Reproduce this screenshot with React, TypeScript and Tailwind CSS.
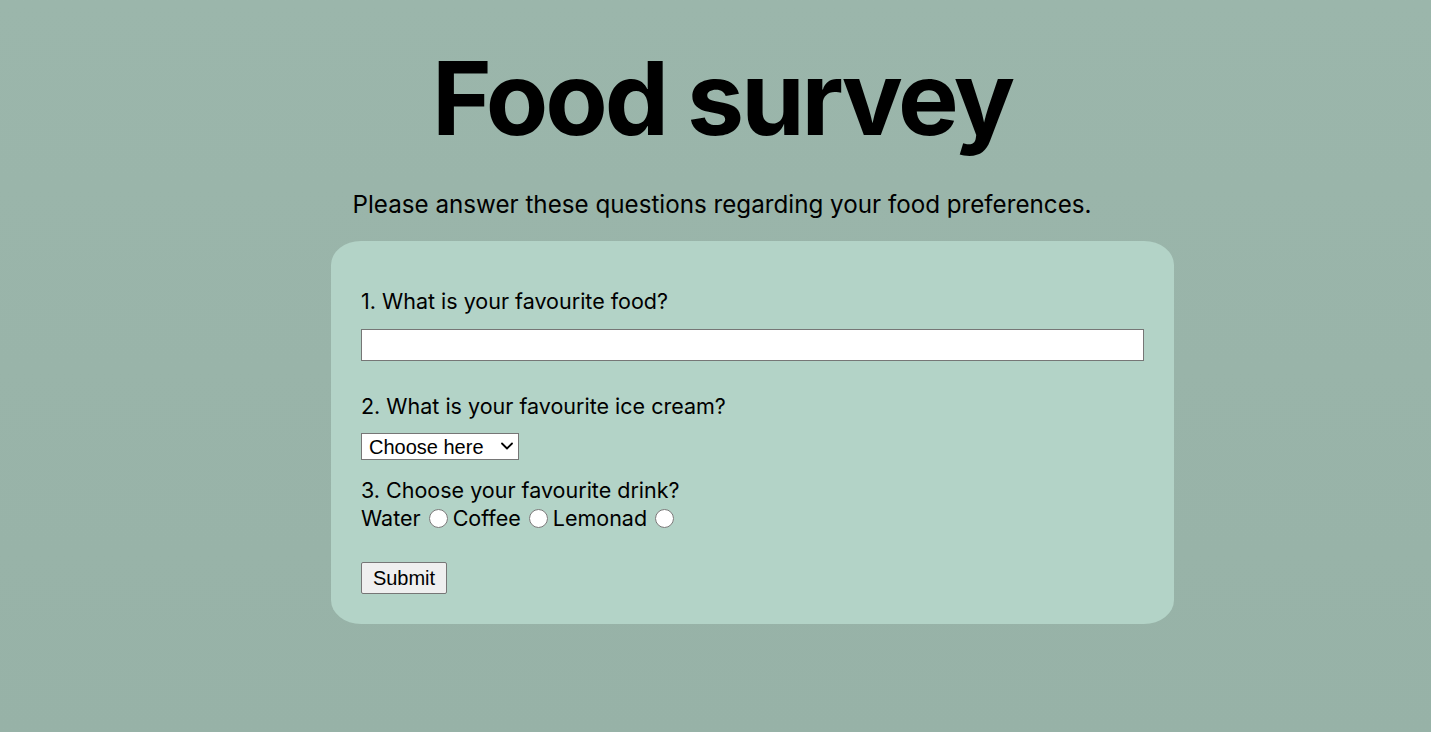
export default function App() {
  return (
    <div className="min-h-[732px] w-full bg-gradient-to-b from-[#9bb6ab] to-[#97b2a7] text-black" style={{ fontFamily: "Inter, 'Noto Sans', sans-serif" }}>
      <div className="flex flex-col items-center pl-[13px] pt-[38px]">
        <h1 className="text-[102px] font-bold leading-[120px] tracking-[-0.03em]">Food survey</h1>
        <p className="mt-[32px] text-[24.2px] leading-[30px]">Please answer these questions regarding your food preferences.</p>

        <form className="ml-[61px] mt-[21px] flex w-[843px] flex-col rounded-[30px_/_24px] bg-[#b3d3c7] px-[30px] pt-[46px] pb-[30px]">
          <label className="text-[21.5px] leading-[28px]">1. What is your favourite food?</label>
          <input type="text" className="mt-[14px] h-[32px] w-full border border-[#767676] bg-white px-1" />

          <label className="mt-[31px] text-[21.5px] leading-[28px]">2. What is your favourite ice cream?</label>
          <div className="relative mt-[13px] h-[27px] w-[158px]">
            <select
              className="h-[27px] w-[158px] appearance-none border border-[#767676] bg-white pl-[7px] text-[20px] leading-[24px]"
              style={{ fontFamily: "'Liberation Sans', Arial, sans-serif" }}
            >
              <option>Choose here</option>
              <option>Vanilla</option>
              <option>Chocolate</option>
              <option>Strawberry</option>
            </select>
            <svg className="pointer-events-none absolute right-[6px] top-[9px]" width="12" height="8" viewBox="0 0 12 8" fill="none">
              <path d="M1 1.5L6 6.5L11 1.5" stroke="#000" strokeWidth="1.8" strokeLinecap="round" strokeLinejoin="round" />
            </svg>
          </div>

          <label className="mt-[16px] text-[21.5px] leading-[28px]">3. Choose your favourite drink?</label>
          <div className="flex items-center text-[21.5px] leading-[28px]">
            <span>Water</span>
            <input type="radio" name="drink" className="ml-[8px] mr-[5px] h-[19px] w-[19px] shrink-0" />
            <span>Coffee</span>
            <input type="radio" name="drink" className="ml-[8px] mr-[5px] h-[19px] w-[19px] shrink-0" />
            <span>Lemonad</span>
            <input type="radio" name="drink" className="ml-[8px] mr-[5px] h-[19px] w-[19px] shrink-0" />
          </div>

          <div className="mt-[30px]">
            <button
              type="submit"
              className="h-[32px] w-[86px] rounded-[2px] border border-[#767676] bg-[#efefef] text-[20px]"
              style={{ fontFamily: "'Liberation Sans', Arial, sans-serif" }}
            >
              Submit
            </button>
          </div>
        </form>
      </div>
    </div>
  );
}
